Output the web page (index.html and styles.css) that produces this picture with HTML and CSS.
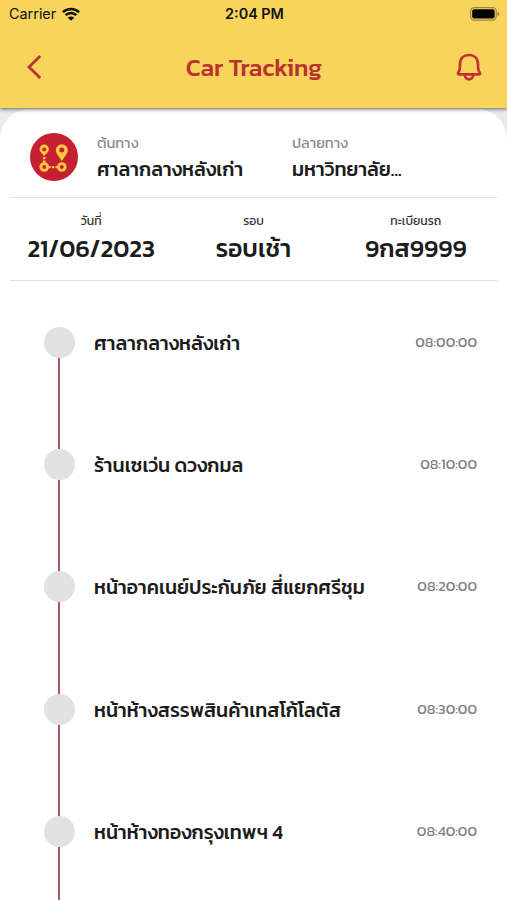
FILE: index.html
```html
<!DOCTYPE html>
<html lang="th">
<head>
    <meta charset="UTF-8">
    <meta name="viewport" content="width=device-width, initial-scale=1.0">
    <title>Car Tracking</title>
    <link rel="stylesheet" href="styles.css">
</head>

<body>
<header class="header">
    <div class="status-bar">
        <div class="carrier">
            <span>Carrier</span>
            <svg width="18" height="14" viewBox="0 0 18 14">
                <path d="M.9 5.200a11.600 11.600 0 0 1 16.200 0M3.700 8.200a7.600 7.600 0 0 1 10.600 0" fill="none" stroke="#111" stroke-width="2.500"/>
                <path d="M9 13.800L5.800 10.700a4.600 4.600 0 0 1 6.400 0z" fill="#111"/>
            </svg>
        </div>
        <div class="clock">2:04 PM</div>
        <svg class="battery" width="30" height="14" viewBox="0 0 30 14">
            <rect x=".6" y=".6" width="25.6" height="12.6" rx="3.6" fill="none" stroke="#9b8741" stroke-width="1.2"/>
            <rect x="2.2" y="2.2" width="22.4" height="9.4" rx="2" fill="#000"/>
            <path d="M27.5 4.8q2 .6 2 2.2t-2 2.2z" fill="#9b8741"/>
        </svg>
    </div>
    <div class="nav-bar">
        <svg class="back" width="16" height="24" viewBox="0 0 16 24">
            <path d="M14.200 1L3 12l11.200 11" fill="none" stroke="#b9332f" stroke-width="2.800"/>
        </svg>
        <h1>Car Tracking</h1>
        <svg class="bell" width="26" height="28" viewBox="0 0 26 28">
            <path d="M3.200 21.300C1.600 21.300 1.800 20 2.600 19C4 17.200 4 15 4 11.500C4 5.600 7.600 2 13 2s9 3.600 9 9.500c0 3.500 0 5.700 1.400 7.500c.8 1 1 2.300-.6 2.300z" fill="none" stroke="#c6302e" stroke-width="2.700" stroke-linejoin="round"/>
            <path d="M8.800 21.800a4.200 4.500 0 0 0 8.400 0" fill="none" stroke="#c6302e" stroke-width="2.700"/>
        </svg>
    </div>
</header>

<main class="card">
    <section class="route">
        <svg class="route-icon" width="48" height="48" viewBox="0 0 48 48">
            <circle cx="24" cy="24" r="24" fill="#c51f30"/>
            <g fill="#fbc640">
                <path d="M14.200 23c-2.500-2.800-4.700-4.300-4.700-6.700a4.700 4.700 0 0 1 9.400 0c0 2.400-2.200 3.900-4.700 6.700z"/>
                <path d="M31.800 28c-3.600-5.500-6-7.700-6-10.800a6 6 0 0 1 12 0c0 3.100-2.400 5.300-6 10.800z"/>
                <circle cx="14.200" cy="34" r="4.800"/>
                <circle cx="31.800" cy="34" r="4.800"/>
                <path d="M12.900 24h2.600v2.200h-2.600zM12.900 27.400h2.600v2.600h-2.600zM18.500 32.900h2.200v2.300h-2.200zM21.900 32.900h2.400v2.300h-2.400zM25.500 32.900h2.200v2.300h-2.200z"/>
            </g>
            <g fill="#c51f30">
                <circle cx="14.200" cy="16.400" r="1.900"/>
                <circle cx="31.800" cy="17" r="2.500"/>
                <circle cx="14.200" cy="34" r="1.900"/>
                <circle cx="31.800" cy="34" r="1.900"/>
            </g>
        </svg>
        <div class="place">
            <div class="place-label">ต้นทาง</div>
            <div class="place-name">ศาลากลางหลังเก่า</div>
        </div>
        <div class="place">
            <div class="place-label">ปลายทาง</div>
            <div class="place-name">มหาวิทยาลัย...</div>
        </div>
    </section>

    <section class="trip">
        <div class="trip-item">
            <div class="trip-label">วันที่</div>
            <div class="trip-value">21/06/2023</div>
        </div>
        <div class="trip-item">
            <div class="trip-label">รอบ</div>
            <div class="trip-value">รอบเช้า</div>
        </div>
        <div class="trip-item">
            <div class="trip-label">ทะเบียนรถ</div>
            <div class="trip-value">9กส9999</div>
        </div>
    </section>

    <ul class="timeline">
        <li class="stop">
            <div class="track"><i class="dot"></i></div>
            <span class="stop-name">ศาลากลางหลังเก่า</span>
            <span class="stop-time">08:00:00</span>
        </li>
        <li class="stop">
            <div class="track"><i class="dot"></i></div>
            <span class="stop-name">ร้านเซเว่น ดวงกมล</span>
            <span class="stop-time">08:10:00</span>
        </li>
        <li class="stop">
            <div class="track"><i class="dot"></i></div>
            <span class="stop-name">หน้าอาคเนย์ประกันภัย สี่แยกศรีชุม</span>
            <span class="stop-time">08:20:00</span>
        </li>
        <li class="stop">
            <div class="track"><i class="dot"></i></div>
            <span class="stop-name">หน้าห้างสรรพสินค้าเทสโก้โลตัส</span>
            <span class="stop-time">08:30:00</span>
        </li>
        <li class="stop">
            <div class="track"><i class="dot"></i></div>
            <span class="stop-name">หน้าห้างทองกรุงเทพฯ 4</span>
            <span class="stop-time">08:40:00</span>
        </li>
    </ul>
</main>
</body>

</html>
```
FILE: styles.css
```css
* {
    box-sizing: border-box;
}

body {
    margin: 0;
    height: 900px;
    overflow: hidden;
    display: flex;
    flex-direction: column;
    background: #e9ebef;
    font-family: Kanit, Prompt, "Noto Sans Thai", Inter, "Noto Sans", sans-serif;
    color: #1c1c1c;
}

.header {
    height: 108px;
    flex: none;
    background: #f8d45c;
    box-shadow: 0 1px 4px rgba(0, 0, 0, 0.6);
    z-index: 1;
}

.status-bar {
    height: 27px;
    padding: 0 7px 0 9px;
    display: grid;
    grid-template-columns: 1fr auto 1fr;
    align-items: center;
    font-family: Inter, sans-serif;
    font-size: 14.4px;
    color: #111;
}

.carrier {
    display: flex;
    align-items: center;
    gap: 6px;
}

.clock {
    font-weight: 600;
}

.battery {
    justify-self: end;
}

.nav-bar {
    height: 80px;
    padding: 0 25px 0 26px;
    display: grid;
    grid-template-columns: 1fr auto 1fr;
    align-items: center;
}

.nav-bar h1 {
    margin: 0;
    font-size: 24.5px;
    font-weight: 500;
    color: #b9332f;
}

.bell {
    justify-self: end;
}

.card {
    flex: 1;
    margin-top: 1px;
    padding: 0 10px;
    background: #fff;
    border-radius: 30px 30px 0 0;
}

.route {
    height: 89px;
    padding: 7px 0 0 20px;
    display: grid;
    grid-template-columns: 67px 195px 1fr;
    align-items: center;
    border-bottom: 1.5px solid #e0e0e0;
}

.place-label {
    height: 24px;
    line-height: 24px;
    font-size: 14.6px;
    color: #8a8a8a;
}

.place-name {
    height: 28px;
    line-height: 28px;
    font-size: 19.6px;
    font-weight: 500;
}

.trip {
    height: 83px;
    padding-top: 12px;
    display: grid;
    grid-template-columns: repeat(3, 1fr);
    text-align: center;
    border-bottom: 1.5px solid #e0e0e0;
}

.trip-label {
    height: 22px;
    line-height: 22px;
    font-size: 12.2px;
    color: #333;
}

.trip-value {
    height: 34px;
    line-height: 34px;
    font-size: 24.6px;
    font-weight: 500;
}

.timeline {
    margin: 0;
    padding: 46px 20px 0 34px;
    list-style: none;
}

.stop {
    height: 122.2px;
    display: grid;
    grid-template-columns: 50px 1fr auto;
}

.track {
    width: 31px;
    background: linear-gradient(#a85a5a, #a85a5a) 14px 0 / 2px 100% no-repeat;
}

.dot {
    display: block;
    width: 31px;
    height: 31px;
    border-radius: 50%;
    background: #e2e2e2;
}

.stop-name {
    line-height: 33px;
    font-size: 19.6px;
    font-weight: 500;
    white-space: nowrap;
}

.stop-time {
    line-height: 31px;
    font-size: 14.7px;
    color: #808080;
}
```
